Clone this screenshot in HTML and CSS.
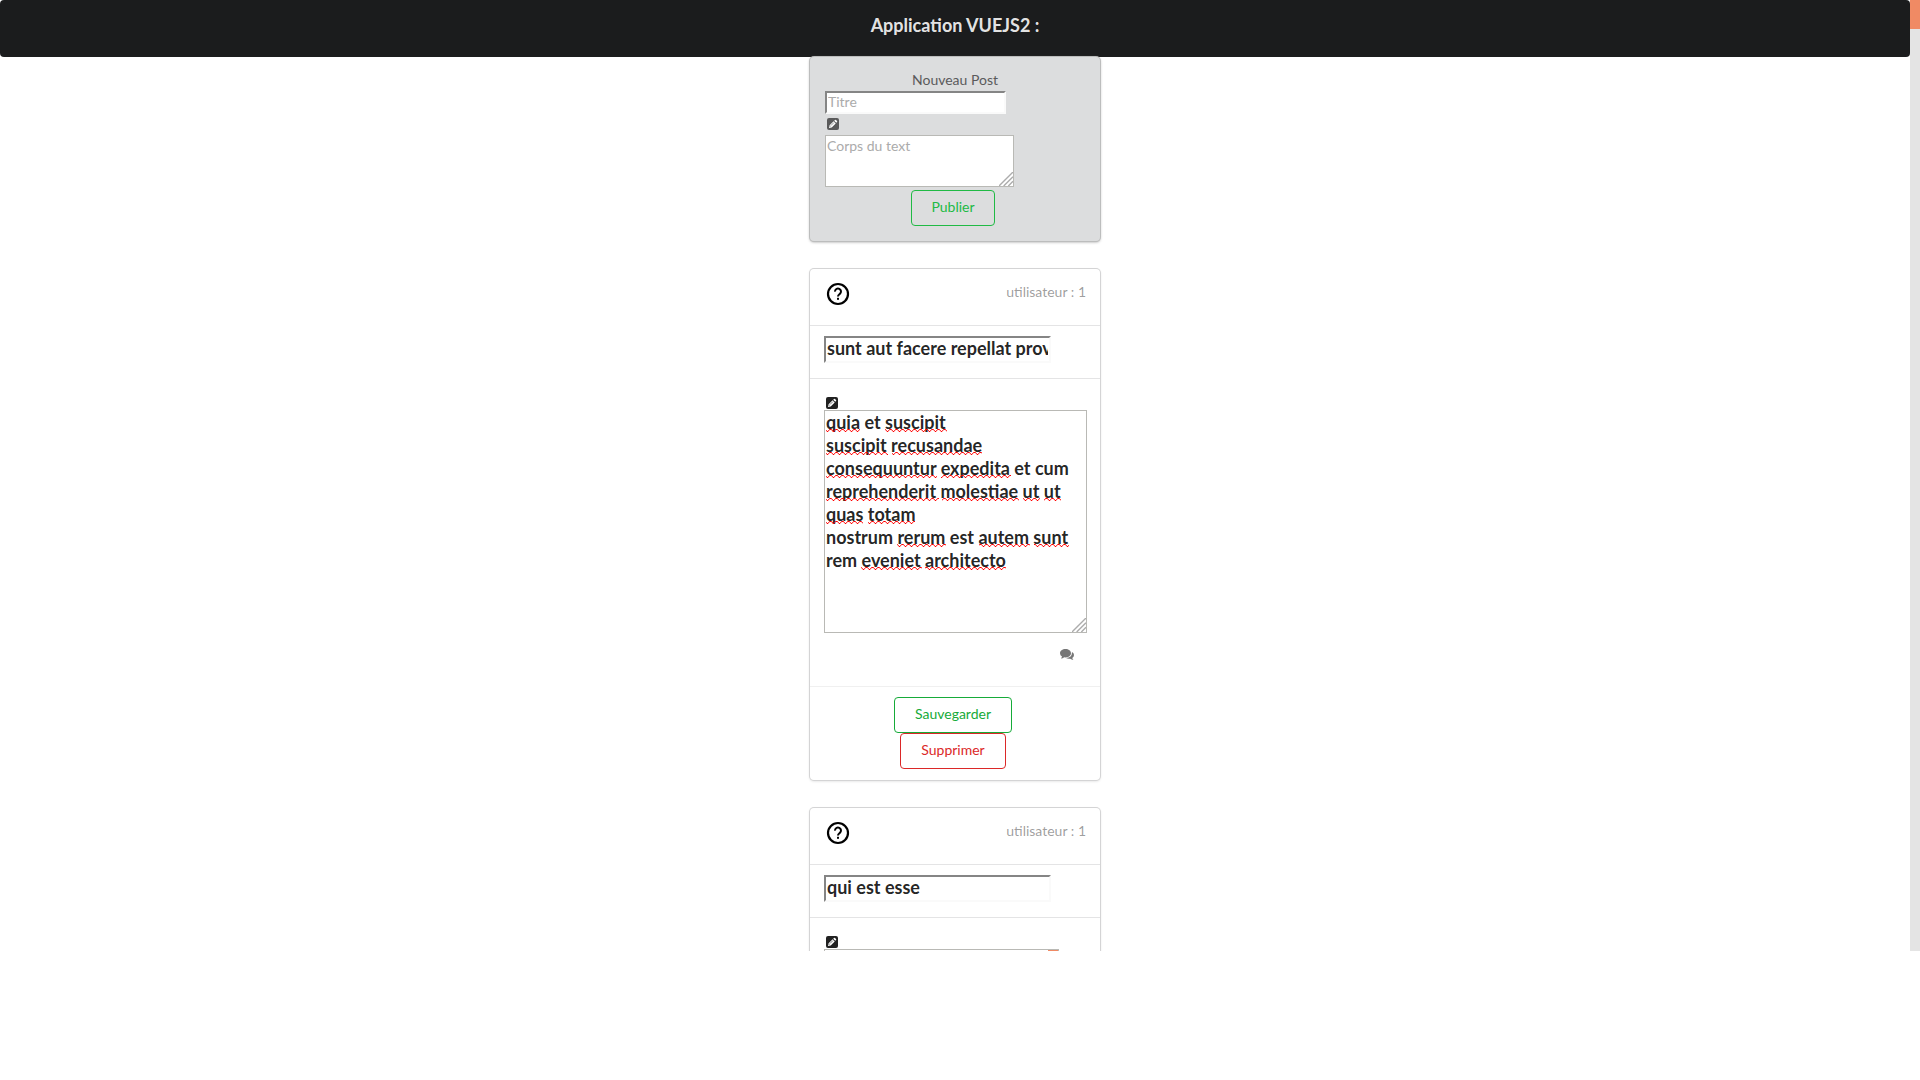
FILE: index.html
```
<!DOCTYPE html>
<html lang="fr">
<head>
<meta charset="utf-8">
<title>Application VUEJS2</title>
<link rel="stylesheet" href="styles.css">
</head>
<body>
<svg class="defs" width="0" height="0" aria-hidden="true">
  <defs>
    <symbol id="pencil" viewBox="0 0 12 12">
      <rect width="12" height="12" rx="2" fill="currentColor"/>
      <path d="M2 10l.6-2.7 4-4 2.1 2.1-4 4zM7.2 2.7l.8-.8q.5-.4 1 0l1 1q.5.5 0 1l-.8.8z" fill="#fff"/>
      <path d="M3.9 7.6l3-3M3 8.3l.8.8" stroke="currentColor" stroke-width=".6"/>
    </symbol>
    <symbol id="question" viewBox="0 0 24 24">
      <circle cx="12" cy="12" r="10" fill="none" stroke="#000" stroke-width="2.2"/>
      <path d="M9 9.6a3 3 0 1 1 4.8 2.3c-1 .8-1.8 1.2-1.8 2.6" fill="none" stroke="#000" stroke-width="2"/>
      <rect x="11" y="15.8" width="2" height="2"/>
    </symbol>
    <symbol id="grip" viewBox="0 0 15 15">
      <path d="M0 15L15 0M5 15L15 5M10 15l5-5" stroke="#acacac" stroke-width="1.5" fill="none"/>
    </symbol>
    <symbol id="comments" viewBox="0 0 14 12">
      <path d="M5.5 0C8.600 0 11 1.900 11 4.200S8.600 8.400 5.500 8.400q-.7 0-1.300-.1Q2.800 9.400.9 9.600q.9-.8 1.100-2Q0 6.300 0 4.200C0 1.900 2.400 0 5.500 0z" fill="currentColor"/>
      <path d="M12 3q2 1.200 2 3.100 0 1.800-1.700 3 .2 1 1.100 1.800-1.900-.1-3.200-1.200-2.200.4-4.200-.6Q12 8.800 12 3z" fill="currentColor"/>
    </symbol>
    <pattern id="wave" width="6" height="3" patternUnits="userSpaceOnUse">
      <path d="M0 .5h1.500l1.500 2h1l1.500-2H6" stroke="#f00" stroke-width="1" fill="none"/>
    </pattern>
  </defs>
</svg>
<div class="viewport">
  <div class="page">
    <header class="banner"><h1>Application VUEJS2 :</h1></header>
    <main class="cards">
      <form class="card composer">
        <label class="composer-title" for="new-title">Nouveau Post</label>
        <input class="field new-title" id="new-title" type="text" placeholder="Titre">
        <svg class="pencil"><use href="#pencil"/></svg>
        <div class="area new-body">
          <textarea placeholder="Corps du text" aria-label="Corps du text"></textarea>
          <svg class="grip"><use href="#grip"/></svg>
        </div>
        <button class="button publish" type="button">Publier</button>
      </form>

      <article class="card">
        <div class="author">
          <svg class="avatar"><use href="#question"/></svg>
          <span>utilisateur : 1</span>
        </div>
        <div class="title-row">
          <input class="field post-title" type="text" aria-label="Titre" value="sunt aut facere repellat provident occaecati excepturi optio reprehenderit">
        </div>
        <div class="body-row">
          <svg class="pencil"><use href="#pencil"/></svg>
          <div class="area post-body">
            <textarea aria-label="Texte" spellcheck="false">quia et suscipit
suscipit recusandae consequuntur expedita et cum reprehenderit molestiae ut ut quas totam
nostrum rerum est autem sunt rem eveniet architecto</textarea>
            <svg class="spelling" aria-hidden="true">
              <g fill="url(#wave)">
                <path d="M2 0h34v3H2zM61 0h62v3H61z" transform="translate(0 19)"/>
                <path d="M2 0h62v3H2zM68 0h90v3H68z" transform="translate(0 42)"/>
                <path d="M2 0h111v3H2zM117 0h70v3h-70z" transform="translate(0 65)"/>
                <path d="M2 0h113v3H2zM118 0h77v3h-77zM199 0h17v3h-17zM220 0h17v3h-17z" transform="translate(0 88)"/>
                <path d="M2 0h37v3H2zM44 0h47v3H44z" transform="translate(0 111)"/>
                <path d="M73 0h49v3H73zM155 0h51v3h-51zM210 0h35v3h-35z" transform="translate(0 134)"/>
                <path d="M37 0h61v3H37zM101 0h81v3h-81z" transform="translate(0 157)"/>
              </g>
            </svg>
            <svg class="grip"><use href="#grip"/></svg>
          </div>
          <svg class="comments"><use href="#comments"/></svg>
        </div>
        <div class="actions">
          <button class="button save" type="button">Sauvegarder</button>
          <button class="button delete" type="button">Supprimer</button>
        </div>
      </article>

      <article class="card">
        <div class="author">
          <svg class="avatar"><use href="#question"/></svg>
          <span>utilisateur : 1</span>
        </div>
        <div class="title-row">
          <input class="field post-title" type="text" aria-label="Titre" value="qui est esse">
        </div>
        <div class="body-row">
          <svg class="pencil"><use href="#pencil"/></svg>
          <div class="area post-body narrow">
            <textarea aria-label="Texte" spellcheck="false"></textarea>
            <span class="area-thumb"></span>
          </div>
        </div>
      </article>
    </main>
  </div>
  <div class="track"><div class="thumb"></div></div>
</div>
</body>
</html>
```

FILE: styles.css
```
* { box-sizing: border-box; }

body {
  margin: 0;
  background: #fff;
  color: rgba(0, 0, 0, .87);
  font: 14px/20px Lato, "Liberation Sans", sans-serif;
}

svg { display: block; }
.defs { position: absolute; }

.viewport {
  display: grid;
  grid-template-columns: 1fr 10px;
  height: 88.1vh;
  overflow: hidden;
}

.page { min-height: 0; overflow: hidden; }

.track { background: #e4e4e4; }
.thumb { height: 29px; background: #f08a64; }

.banner {
  padding: 14px 14px 20px;
  border-radius: 4px;
  background: #1b1c1d;
  color: rgba(255, 255, 255, .9);
  text-align: center;
}
.banner h1 { margin: 0; font-size: 18px; line-height: 23px; }

.cards {
  display: flex;
  flex-direction: column;
  align-items: center;
  gap: 28px;
}

.card {
  display: flex;
  flex-direction: column;
  flex: none;
  width: 290px;
  border-radius: 4px;
  background: #fff;
  box-shadow: 0 0 0 1px #d4d4d5, 0 1px 3px 0 #d4d4d5;
}

.field {
  padding: 0 1px 2px;
  border: 2px solid;
  border-color: #858585 #fafafa #fafafa #858585;
  background: #fff;
  color: inherit;
  font: inherit;
}

.area { position: relative; }
.area textarea {
  display: block;
  width: 100%;
  height: 100%;
  padding: 0 1px;
  border: 1px solid #b9b9b5;
  background: #fff;
  color: inherit;
  font: inherit;
  resize: none;
  overflow: hidden;
}
::placeholder { color: #ababab; opacity: 1; }

.grip {
  position: absolute;
  right: 1px;
  bottom: 1px;
  width: 14px;
  height: 14px;
}

.pencil { width: 12px; height: 12px; margin-left: 2px; }

.composer {
  padding: 13px 15px 15px;
  background: #dcddde;
  color: #5a5a5b;
  box-shadow: 0 0 0 1px #bcbdbd, 0 1px 3px 0 #999;
}
.composer-title { align-self: center; }
.new-title { width: 181px; height: 23px; margin: 1px 0 4px; }
.new-body { width: 189px; height: 52px; margin: 5px 0 3px; }

.button {
  align-self: center;
  height: 36px;
  margin: 0 4px 0 0;
  padding: 0 20px 2px;
  border: 1px solid currentColor;
  border-radius: 4px;
  background: transparent;
  font: inherit;
}
.publish { padding: 0 19px 2px; color: #21ba45; }
.save { color: #16ab39; }
.delete { color: #db2828; }

.author {
  display: flex;
  justify-content: space-between;
  padding: 13px 14px 19px;
  color: rgba(0, 0, 0, .4);
}
.avatar { width: 24px; height: 24px; margin-left: 2px; }

.title-row {
  padding: 10px 14px 15px;
  border-top: 1px solid #e4e4e5;
}
.post-title {
  display: block;
  width: 227px;
  height: 27px;
  padding-bottom: 4px;
  font-size: 18px;
  font-weight: 700;
}

.body-row {
  padding: 18px 13px 25px 14px;
  border-top: 1px solid #e4e4e5;
}
.post-body {
  height: 223px;
  margin-top: 1px;
  font-size: 18px;
  font-weight: 700;
  line-height: 23px;
}
.narrow { width: 235px; }
.area-thumb {
  position: absolute;
  top: 1px;
  right: 1px;
  width: 10px;
  height: 40px;
  background: #f08a64;
}
.spelling {
  position: absolute;
  inset: 0;
  width: 100%;
  height: 100%;
  pointer-events: none;
}
.comments {
  width: 14px;
  height: 12px;
  margin: 16px 13px 0 auto;
  color: #767676;
}

.actions {
  display: flex;
  flex-direction: column;
  padding: 10px 14px 11px;
  border-top: 1px solid #f0f0f0;
}
```
